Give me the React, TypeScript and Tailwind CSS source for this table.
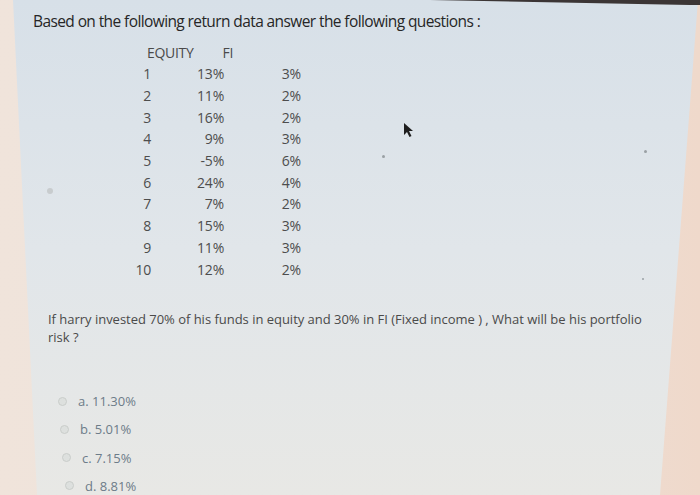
import React from "react";

const rows: [string, string, string][] = [
  ["1", "13%", "3%"],
  ["2", "11%", "2%"],
  ["3", "16%", "2%"],
  ["4", "9%", "3%"],
  ["5", "-5%", "6%"],
  ["6", "24%", "4%"],
  ["7", "7%", "2%"],
  ["8", "15%", "3%"],
  ["9", "11%", "3%"],
  ["10", "12%", "2%"],
];

const options = [
  { label: "a. 11.30%", shift: "ml-0" },
  { label: "b. 5.01%", shift: "ml-[2px]" },
  { label: "c. 7.15%", shift: "ml-[4px]" },
  { label: "d. 8.81%", shift: "ml-[7px]" },
];

export default function App() {
  return (
    <div
      className="relative w-[700px] h-[495px] overflow-hidden bg-gradient-to-r from-[#f0e4db] via-[#ece2dc] to-[#efd9cb]"
      style={{ fontFamily: '"Open Sans", "Noto Sans", sans-serif' }}
    >
      <div className="h-full flex flex-col bg-gradient-to-b from-[#d7e0e8] via-[#e1e6ea] to-[#e8e8e5] [clip-path:polygon(13px_0,698px_0,660px_495px,37px_495px)]">
        <div className="pt-[11px] pl-[33px] text-[15.5px] leading-[20px] text-[#262626] tracking-[-0.6px]">
          Based on the following return data answer the following questions :
        </div>

        <div className="mt-[11px] flex h-[22px] items-center text-[14px] text-[#4a4a4a] tracking-[-0.3px]">
          <span className="ml-[147px]">EQUITY</span>
          <span className="ml-[29px]">FI</span>
        </div>

        <div className="ml-[110px] grid grid-cols-[41px_73px_77px] auto-rows-[21.7px] items-center text-[14px] text-[#4d4d4d] tracking-[-0.2px]">
          {rows.map(([n, e, f]) => (
            <React.Fragment key={n}>
              <span className="text-right">{n}</span>
              <span className="text-right">{e}</span>
              <span className="text-right">{f}</span>
            </React.Fragment>
          ))}
        </div>

        <div className="mt-[30px] pl-[48px] pr-[30px] text-[13px] leading-[18px] text-[#4a4a4a] tracking-[-0.02px]">
          If harry invested 70% of his funds in equity and 30% in FI (Fixed income ) , What will be his portfolio
          <br />
          risk ?
        </div>

        <div className="mt-[41px] pl-[58px] flex flex-col text-[13px] leading-[16px] text-[#6d7c89]">
          {options.map((o) => (
            <div key={o.label} className={`flex h-[28.3px] items-center gap-[11px] ${o.shift}`}>
              <span className="w-[9px] h-[9px] rounded-full border border-[#c9cdca] bg-[#dde0de]" />
              <span>{o.label}</span>
            </div>
          ))}
        </div>
      </div>

      {/* top bezel */}
      <div className="absolute top-0 left-0 w-[700px] h-[5px] bg-[#3b3535] [clip-path:polygon(430px_0,700px_0,700px_5px,690px_5px)]" />

      {/* mouse cursor */}
      <svg className="absolute left-[403px] top-[122px]" width="12" height="16" viewBox="0 0 12 16">
        <path d="M1 1 L1 13 L4 10 L6.5 15 L8.5 14 L6 9 L10 9 Z" fill="#1e1e1e" />
      </svg>

      {/* dust specks */}
      <span className="absolute left-[47px] top-[188px] w-[6px] h-[6px] rounded-full bg-[#c8ccce]" />
      <span className="absolute left-[382px] top-[155px] w-[3px] h-[3px] rounded-full bg-[#9aa0a4]" />
      <span className="absolute left-[644px] top-[150px] w-[3px] h-[3px] rounded-full bg-[#9aa0a4]" />
      <span className="absolute left-[642px] top-[278px] w-[2px] h-[2px] rounded-full bg-[#9aa0a4]" />
    </div>
  );
}
